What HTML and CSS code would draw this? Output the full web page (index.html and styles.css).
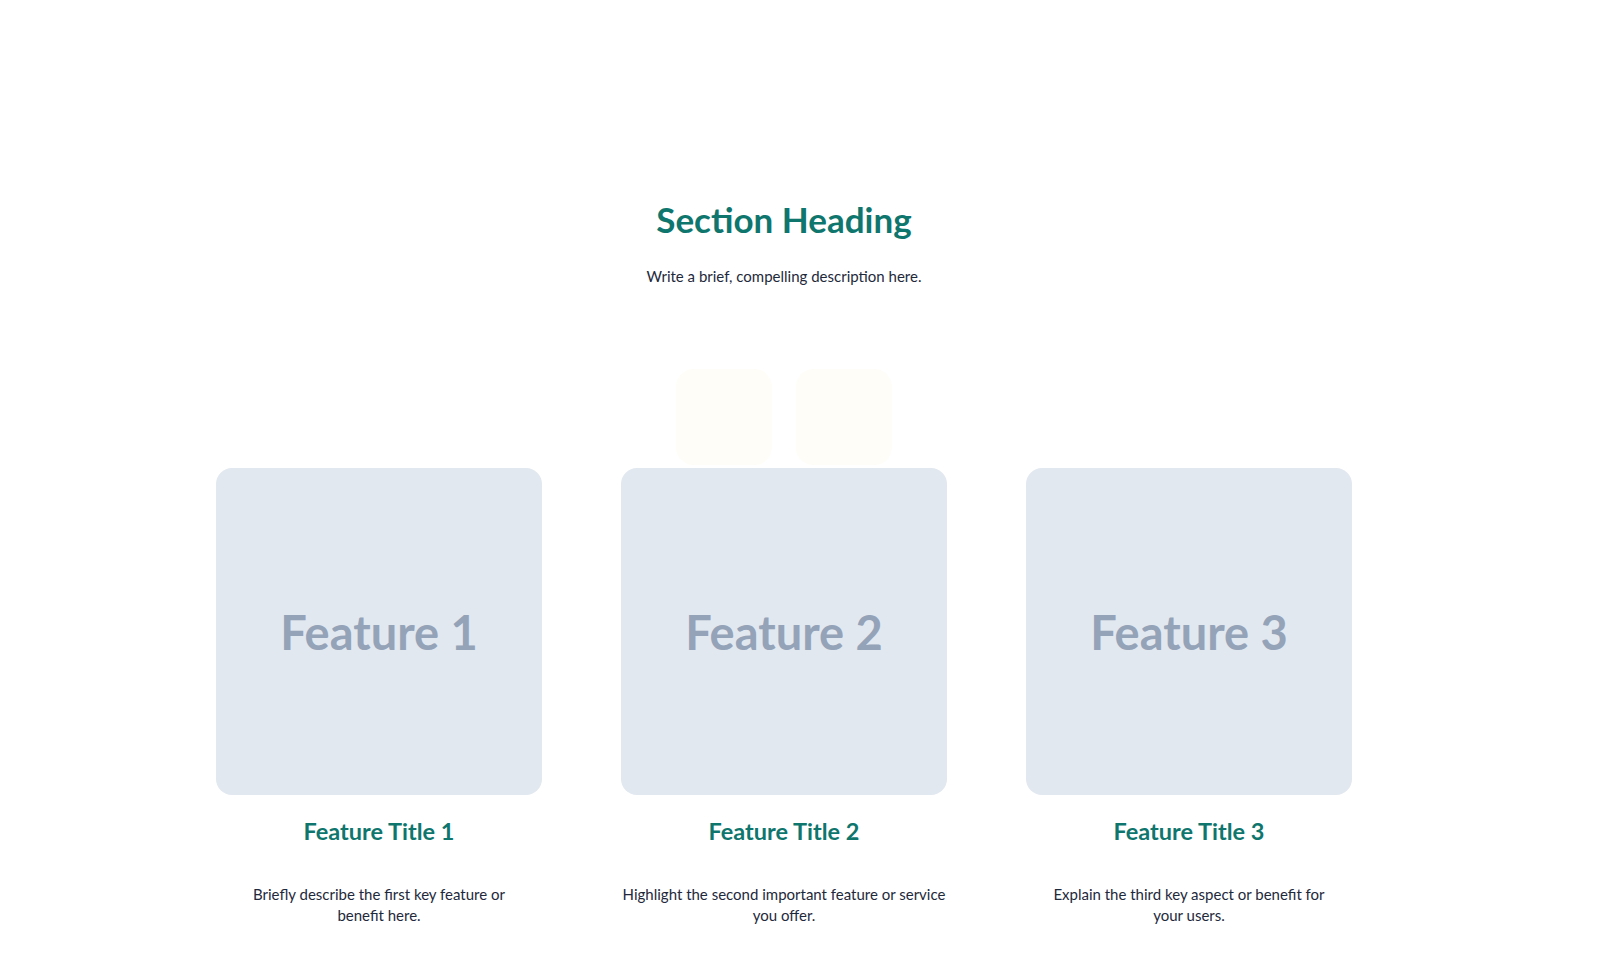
FILE: index.html
```html
<!DOCTYPE html>
<html lang="en">
<head>
<meta charset="utf-8">
<title>Features</title>
<link rel="stylesheet" href="styles.css">
</head>
<body>
<main class="page">
  <section class="features">
    <header class="intro">
      <h1 class="heading">Section Heading</h1>
      <p class="lead">Write a brief, compelling description here.</p>
    </header>
    <div class="chips">
      <div class="chip"></div>
      <div class="chip"></div>
    </div>
    <div class="grid">
      <article class="card">
        <div class="thumb"><span>Feature 1</span></div>
        <h2 class="title">Feature Title 1</h2>
        <p class="text">Briefly describe the first key feature or benefit here.</p>
      </article>
      <article class="card">
        <div class="thumb"><span>Feature 2</span></div>
        <h2 class="title">Feature Title 2</h2>
        <p class="text">Highlight the second important feature or service you offer.</p>
      </article>
      <article class="card">
        <div class="thumb"><span>Feature 3</span></div>
        <h2 class="title">Feature Title 3</h2>
        <p class="text">Explain the third key aspect or benefit for your users.</p>
      </article>
    </div>
  </section>
</main>
</body>
</html>
```
FILE: styles.css
```css
* { box-sizing: border-box; }
html, body { margin: 0; padding: 0; background: #ffffff; }
body {
  font-family: "Lato", "Noto Sans", sans-serif;
  color: #1e293b;
}
.page {
  width: 1568px;
  padding-top: 195px;
}
.features {
  display: flex;
  flex-direction: column;
  align-items: center;
}
.intro { text-align: center; }
.heading {
  margin: 0;
  font-size: 35px;
  line-height: 48px;
  font-weight: 700;
  color: #0f766e;
}
.lead {
  margin: 22px 0 0;
  font-size: 15px;
  line-height: 22px;
}
.chips {
  display: flex;
  gap: 24px;
  margin-top: 82px;
}
.chip {
  width: 96px;
  height: 96px;
  border-radius: 18px;
  background: #fefdf7;
}
.grid {
  display: grid;
  grid-template-columns: repeat(3, 326px);
  column-gap: 79px;
  margin-top: 3px;
}
.card {
  display: flex;
  flex-direction: column;
  align-items: center;
  text-align: center;
}
.thumb {
  width: 326px;
  height: 327px;
  border-radius: 16px;
  background: #e2e8f0;
  display: flex;
  align-items: center;
  justify-content: center;
}
.thumb span {
  font-family: "Lato", sans-serif;
  font-weight: 700;
  font-size: 47px;
  color: #94a3b8;
}
.title {
  margin: 20px 0 0;
  font-size: 23.5px;
  line-height: 32px;
  font-weight: 700;
  color: #0f766e;
}
.text {
  margin: 37px 0 0;
  padding: 0;
  font-size: 15px;
  line-height: 21px;
  text-wrap: pretty;
}
```
